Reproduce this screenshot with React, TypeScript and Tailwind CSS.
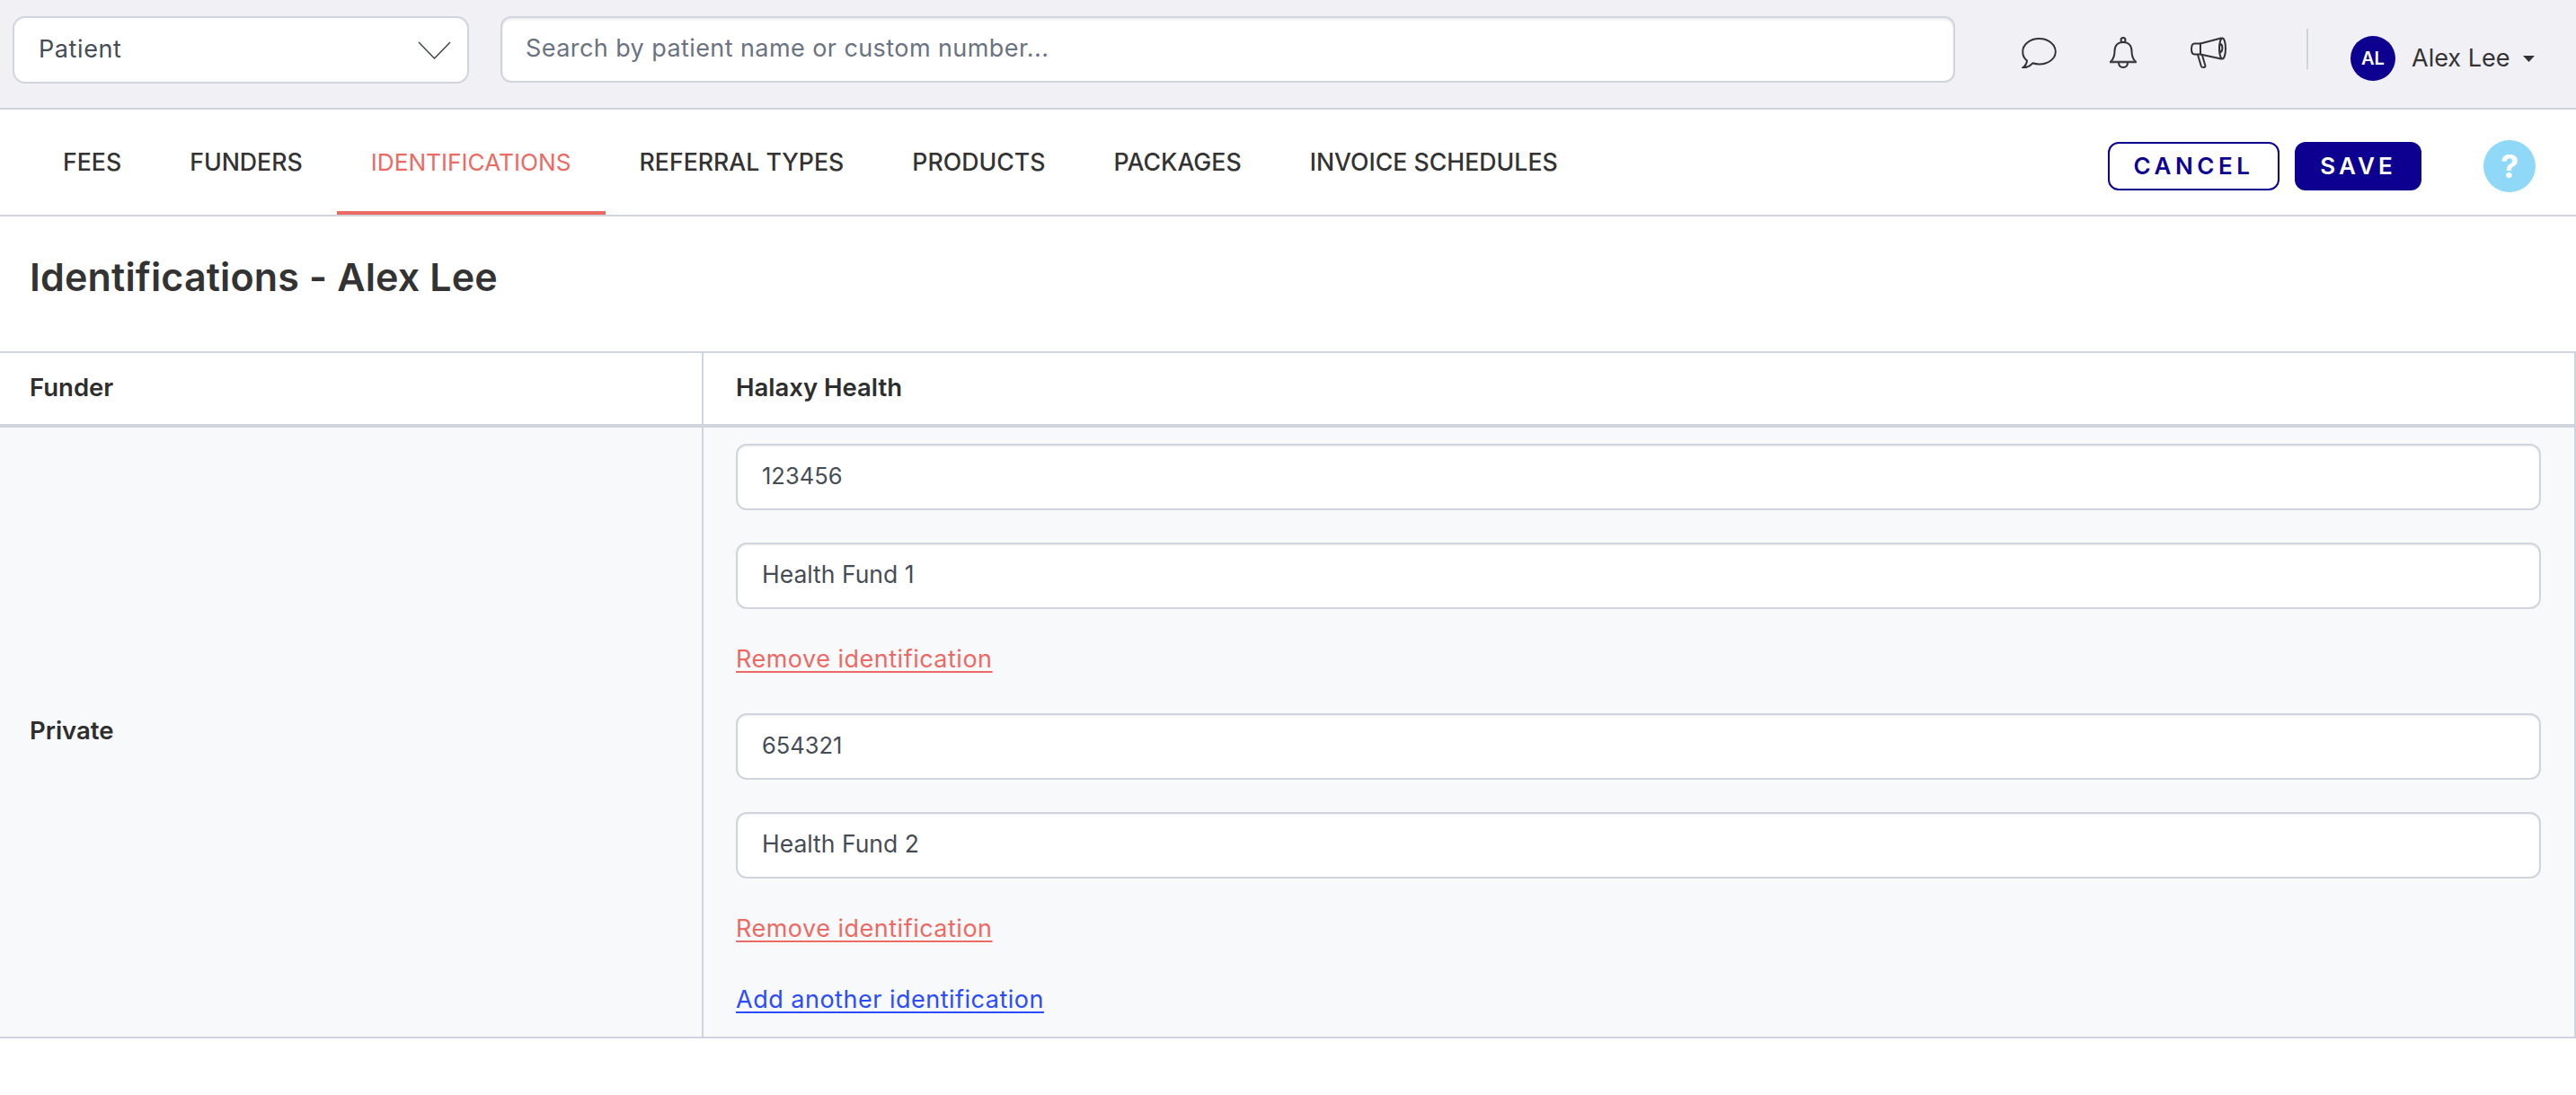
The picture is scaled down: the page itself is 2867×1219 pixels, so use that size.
import React from "react";

const tabs = ["FEES", "FUNDERS", "IDENTIFICATIONS", "REFERRAL TYPES", "PRODUCTS", "PACKAGES", "INVOICE SCHEDULES"];

function Field({ value, className = "" }: { value: string; className?: string }) {
  return (
    <div className={"h-[74px] w-[2009px] flex items-center pl-[27px] pb-[2px] bg-white border-2 border-[#d0d4dc] rounded-[12px] shadow-[inset_0_1px_2px_rgba(0,0,0,0.08)] text-[#464c55] " + className}>
      {value}
    </div>
  );
}

function RemoveLink({ className = "" }: { className?: string }) {
  return (
    <a className={"block w-fit text-[27px] tracking-[0.5px] leading-[32px] text-[#ec6a64] underline decoration-2 underline-offset-[4px] " + className}>
      Remove identification
    </a>
  );
}

export default function App() {
  return (
    <div className="min-h-[1219px] bg-white font-['Inter',sans-serif] text-[#333333]">
      <header className="h-[122px] bg-[#f0f0f5] border-b-2 border-[#d0d4dc] flex items-start pt-[18px] pl-[14px]">
        <div className="w-[508px] h-[75px] bg-white border-2 border-[#d0d4dc] rounded-[14px] flex items-center justify-between pl-[27px] pr-[18px] text-[27px] tracking-[0.6px] text-[#464c55]">
          <span>Patient</span>
          <svg width="37" height="20" viewBox="0 0 37 20" fill="none" stroke="#464c55" strokeWidth="1.6"><path d="M1 1l17.500 18L36 1" /></svg>
        </div>
        <div className="ml-[35px] w-[1619px] h-[74px] bg-white border-2 border-[#d0d4dc] rounded-[12px] shadow-[inset_0_2px_3px_rgba(0,0,0,0.08)] flex items-center pl-[26px] pb-[1px] text-[27px] tracking-[0.42px] text-[#6b7280]">
          Search by patient name or custom number...
        </div>
        <svg className="ml-[74px] mt-[24px]" width="39" height="34" viewBox="0 0 39 34" fill="none" stroke="#333" strokeWidth="2" strokeLinejoin="round">
          <path d="M1 33.500C3.500 32 5.500 29 6 25.500C2.800 23 1.200 19.500 1.200 15.500C1.200 7.500 9.500 1 19.500 1S37.800 7.500 37.800 15.500 29.500 29.500 19.500 29.500C16.800 29.500 14.500 29 12.500 28.300C9.500 31.500 5.500 33.500 1 33.500Z" />
        </svg>
        <svg className="ml-[59px] mt-[23px]" width="30" height="35" viewBox="0 0 30 35" fill="none" stroke="#333" strokeWidth="2" strokeLinejoin="round">
          <circle cx="15" cy="3.500" r="2.500" />
          <path d="M15 6C9 6 5.500 10 5.500 16C5.500 21 4 25 1 28H29C26 25 24.500 21 24.500 16C24.500 10 21 6 15 6Z" />
          <path d="M0 28H30" strokeWidth="2.500" stroke="#444" />
          <path d="M10 28.500C10 32 12 34 15 34S20 32 20 28.500" />
        </svg>
        <svg className="ml-[60px] mt-[23px]" width="40" height="35" viewBox="0 0 40 35" fill="none" stroke="#333" strokeWidth="2" strokeLinejoin="round" strokeLinecap="round">
          <path d="M11 7.500H4.500C2 7.500 1 9 1 13.500S2 19.500 4.500 19.500H11Z" />
          <path d="M11 7.500L34 1.500M11 19.500L34 24.500" />
          <ellipse cx="35.500" cy="13" rx="3.500" ry="11.500" />
          <path d="M33.500 8C36 9 36 16 33.500 17C31.500 15.500 31.500 9.500 33.500 8Z" />
          <path d="M8 20L12 33C12.500 34.300 16.500 34.500 16.500 32.500L13 20.500" />
        </svg>
        <div className="ml-[89px] mt-[14px] w-[2px] h-[45px] bg-[#d0d4dc]" />
        <div className="ml-[47px] mt-[22px] w-[50px] h-[50px] rounded-full bg-[#0d0091] text-white flex items-center justify-center text-[20px] font-semibold">AL</div>
        <div className="ml-[18px] mt-[31px] text-[27px] leading-[32px] text-[#333]">Alex Lee</div>
        <svg className="ml-[15px] mt-[44px]" width="13" height="7" viewBox="0 0 13 7" fill="#333"><path d="M0 0h13L6.500 7Z" /></svg>
      </header>

      <nav className="h-[119px] border-b-2 border-[#d0d4dc] flex items-start pl-[32px]">
        {tabs.map((t) => (
          <div
            key={t}
            className={
              "h-[117px] px-[38px] flex items-center border-b-4 pt-[4px] " +
              (t === "IDENTIFICATIONS" ? "text-[26.2px] text-[#ec6a64] border-[#ec6a64] font-normal" : "text-[26.7px] font-medium text-[#333] border-transparent")
            }
          >
            {t}
          </div>
        ))}
        <button className="ml-auto mt-[36px] pb-[2px] w-[191px] h-[54px] border-2 border-[#0d0091] rounded-[12px] bg-white text-[#0d0091] text-[26px] font-semibold tracking-[4.5px]">CANCEL</button>
        <button className="ml-[17px] mt-[36px] pb-[2px] w-[141px] h-[54px] rounded-[12px] bg-[#0d0091] text-white text-[26px] font-semibold tracking-[4px]">SAVE</button>
        <div className="ml-[69px] mr-[45px] mt-[34px] w-[58px] h-[58px] rounded-full bg-[#90d8f8] text-white flex items-center justify-center text-[36px] font-bold">?</div>
      </nav>

      <h1 className="h-[150px] pl-[33px] pt-[42px] text-[43px] tracking-[0.15px] leading-[50px] font-semibold text-[#333]">Identifications - Alex Lee</h1>

      <div className="border-t-2 border-b-2 border-r-2 border-[#d0d4dc]">
        <div className="h-[83px] flex border-b-4 border-[#d0d4dc] font-semibold text-[27.5px] text-[#2e2e2e]">
          <div className="w-[783px] pl-[33px] pb-[2px] flex items-center border-r-2 border-[#d0d4dc]">Funder</div>
          <div className="flex-1 pl-[36px] pb-[2px] flex items-center">Halaxy Health</div>
        </div>
        <div className="flex bg-[#f8f9fb] h-[678px]">
          <div className="w-[783px] pl-[33px] pb-[2px] flex items-center border-r-2 border-[#d0d4dc] font-semibold text-[27.5px] text-[#2e2e2e]">Private</div>
          <div className="flex-1 pl-[36px] pt-[18px]">
            <Field value="123456" className="text-[25.5px]" />
            <Field value="Health Fund 1" className="mt-[36px] text-[26.5px]" />
            <RemoveLink className="mt-[40px]" />
            <Field value="654321" className="mt-[44px] text-[25.5px]" />
            <Field value="Health Fund 2" className="mt-[36px] text-[26.5px]" />
            <RemoveLink className="mt-[40px]" />
            <a className="block w-fit mt-[47px] text-[27px] tracking-[0.5px] leading-[32px] text-[#2b4bff] underline decoration-2 underline-offset-[4px]">Add another identification</a>
          </div>
        </div>
      </div>
    </div>
  );
}
